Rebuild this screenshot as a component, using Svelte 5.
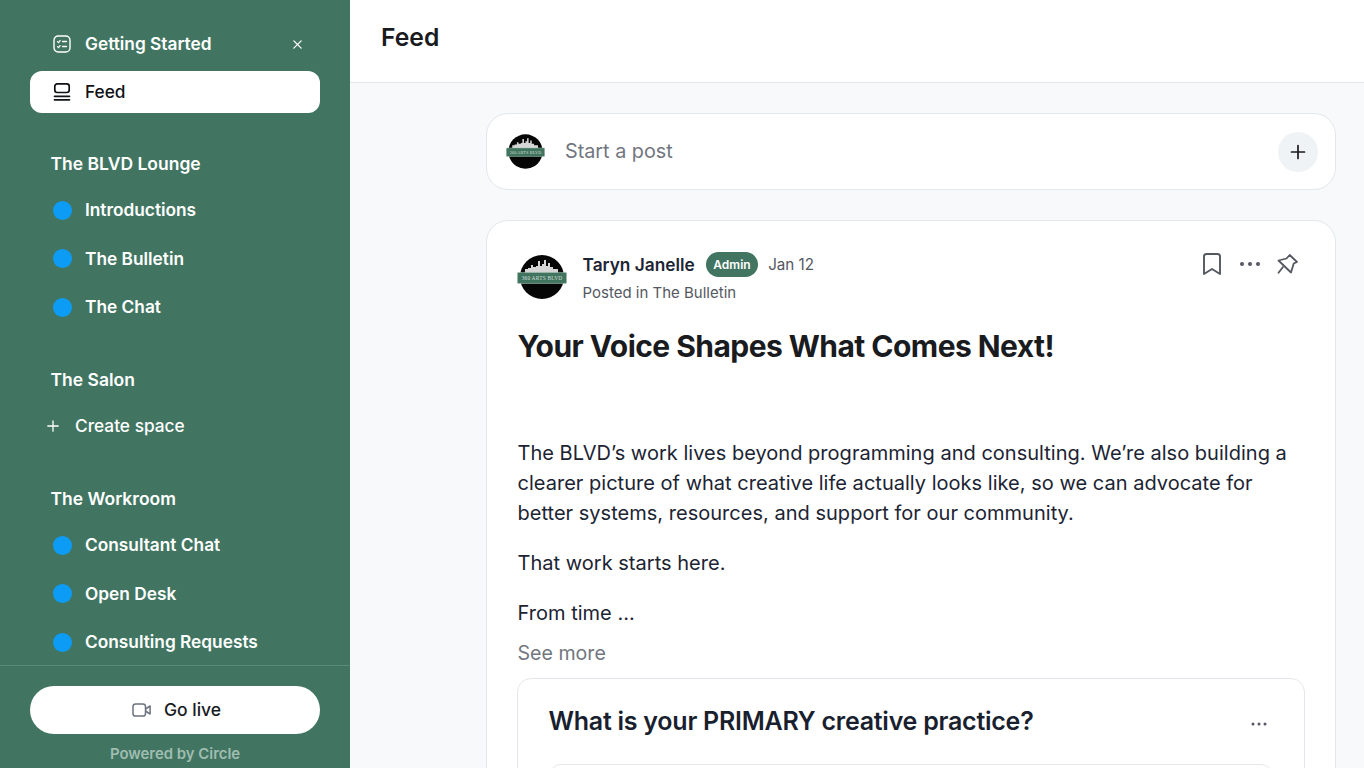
<script>
  const lounge = ['Introductions', 'The Bulletin', 'The Chat'];
  const workroom = ['Consultant Chat', 'Open Desk', 'Consulting Requests'];
</script>

{#snippet avatar(cls)}
  <svg class={cls} viewBox="0 0 50 50" aria-hidden="true">
    <defs><clipPath id={cls + '-c'}><circle cx="25" cy="25" r="22" /></clipPath></defs>
    <circle cx="25" cy="25" r="22" fill="#060606" />
    <g clip-path={'url(#' + cls + '-c)'}>
      <path fill="#d6d6d6" d="M3 21h5v-4h3v-1h3v-3h2v2h3v-1h2v-5h2v5h2v-2h2v-4h2v6h2v-3h2v4h3v2h5v5H3z" />
    </g>
    <rect x="0.400" y="20.400" width="49.200" height="11" rx="1" fill="#41745f" stroke="#a9c4b8" stroke-width=".6" />
    <text class="av-text" x="25" y="27.600" text-anchor="middle">360 ARTS BLVD</text>
  </svg>
{/snippet}

<div class="page">
  <aside class="side">
    <nav class="nav">
      <div class="item top">
        <svg class="ic" viewBox="0 0 20 20" fill="none" stroke="currentColor" stroke-width="1.4" stroke-linecap="round">
          <rect x="2" y="2" width="16" height="16" rx="4.200" />
          <path d="M10.500 7.500h4M10.500 12.500h4M5.500 7.600l1 1 1.600-2M5.500 12.600l1 1 1.600-2" stroke-width="1.300" />
        </svg>
        <span class="grow">Getting Started</span>
        <svg class="x" viewBox="0 0 12 12" fill="none" stroke="currentColor" stroke-width="1.4" stroke-linecap="round"><path d="M2 2l8 8M10 2l-8 8" /></svg>
      </div>
      <div class="item active">
        <svg class="ic" viewBox="0 0 20 20" fill="none" stroke="currentColor" stroke-width="1.7" stroke-linecap="round">
          <rect x="2.800" y="1.800" width="14.400" height="8.700" rx="2.400" />
          <path d="M2.500 14.300h15M2.500 17.800h15" />
        </svg>
        <span>Feed</span>
      </div>

      <h3 class="sec first">The BLVD Lounge</h3>
      {#each lounge as t}
        <div class="item ch"><span class="dot"></span><span>{t}</span></div>
      {/each}

      <h3 class="sec">The Salon</h3>
      <div class="item create">
        <svg class="plus" viewBox="0 0 12 12" fill="none" stroke="currentColor" stroke-width="1.3" stroke-linecap="round"><path d="M6 .8v10.400M.8 6h10.400" /></svg>
        <span>Create space</span>
      </div>

      <h3 class="sec">The Workroom</h3>
      {#each workroom as t}
        <div class="item ch"><span class="dot"></span><span>{t}</span></div>
      {/each}
    </nav>
    <div class="foot">
      <button class="live">
        <svg class="cam" viewBox="0 0 20 16" fill="none" stroke="#6b7280" stroke-width="1.5" stroke-linejoin="round">
          <rect x="1" y="2" width="12.500" height="12" rx="2.600" />
          <path d="M13.500 7l4.600-3v8l-4.600-3" />
        </svg>
        <span>Go live</span>
      </button>
      <div class="pow">Powered by Circle</div>
    </div>
  </aside>

  <main class="main">
    <header class="head"><h1>Feed</h1></header>
    <div class="scroll">
      <div class="composer">
        {@render avatar('av-sm')}
        <span class="start">Start a post</span>
        <span class="add">
          <svg viewBox="0 0 16 16" fill="none" stroke="#191b1f" stroke-width="1.700" stroke-linecap="round"><path d="M8 1.500v13M1.500 8h13" /></svg>
        </span>
      </div>

      <article class="post">
        <div class="meta">
          {@render avatar('av-lg')}
          <div class="who">
            <div class="l1">
              <span class="name">Taryn Janelle</span>
              <span class="badge">Admin</span>
              <span class="date">Jan 12</span>
            </div>
            <div class="l2">Posted in The Bulletin</div>
          </div>
          <div class="acts">
            <svg class="bm" viewBox="0 0 20 24" fill="none" stroke="#545861" stroke-width="1.900" stroke-linejoin="round"><path d="M2 4.500A2.500 2.500 0 0 1 4.500 2h11A2.500 2.500 0 0 1 18 4.500V22l-8-5-8 5z" /></svg>
            <svg class="more" viewBox="0 0 22 6" fill="#545861"><circle cx="3" cy="3" r="2" /><circle cx="11" cy="3" r="2" /><circle cx="19" cy="3" r="2" /></svg>
            <svg class="pin" viewBox="0 0 21 20" fill="none" stroke="#545861" stroke-width="1.800" stroke-linejoin="round" stroke-linecap="round"><path d="M12.700 1L20 8l-3.300 1.500L14 18.500 1.500 6.500 9.500 4.500z" /><path d="M6 13l-4.500 5.700" /></svg>
          </div>
        </div>
        <h2>Your Voice Shapes What Comes Next!</h2>
        <div class="body">
          <p>The BLVD’s work lives beyond programming and consulting. We’re also building a clearer picture of what creative life actually looks like, so we can advocate for better systems, resources, and support for our community.</p>
          <p>That work starts here.</p>
          <p>From time ...</p>
        </div>
        <div class="see">See more</div>
        <div class="poll">
          <div class="poll-head">
            <h4>What is your PRIMARY creative practice?</h4>
            <svg class="more-sm" viewBox="0 0 16 4" fill="#545861"><circle cx="2" cy="2" r="1.500" /><circle cx="8" cy="2" r="1.500" /><circle cx="14" cy="2" r="1.500" /></svg>
          </div>
          <div class="opt"></div>
        </div>
      </article>
    </div>
  </main>
</div>

<style>
  :global(body) { margin: 0; font-family: Inter, "Liberation Sans", sans-serif; }
  .page { display: flex; width: 1364px; height: 768px; overflow: hidden; background: #f7f9fa; }
  .side { width: 350px; flex: none; background: #417562; color: #fff; display: flex; flex-direction: column; }
  .nav { flex: 1; min-height: 0; overflow: hidden; padding: 23px 30px 0; }
  .item { display: flex; align-items: center; height: 42px; padding: 0 17px 0 22px; box-sizing: border-box; font-size: 17.300px; font-weight: 600; line-height: 24px; margin-bottom: 6.500px; }
  .top { margin-bottom: 6px; }
  .active { background: #fff; color: #0f1115; border-radius: 12px; margin-bottom: 0; font-weight: 550; }
  .ic { width: 20px; height: 20px; margin-right: 13px; flex: none; }
  .grow { flex: 1; }
  .x { width: 11px; height: 11px; }
  .sec { margin: 0; padding: 0 20.500px; font-size: 17.500px; font-weight: 600; line-height: 24px; margin-top: 40px; margin-bottom: 13px; }
  .sec.first { margin-top: 39px; }
  .ch .dot { width: 19px; height: 19px; border-radius: 50%; background: #0d9cf5; margin-left: 1px; margin-right: 13px; flex: none; }
  .create { padding-left: 17px; font-weight: 500; }
  .plus { width: 12px; height: 12px; margin-right: 16px; }
  .foot { flex: none; height: 103px; border-top: 1px solid #5b8a78; box-sizing: border-box; padding: 20px 30px 0; }
  .live { width: 290px; height: 48px; background: #fff; border: 0; border-radius: 24px; display: flex; align-items: center; justify-content: center; gap: 12px; font: 500 17.500px/24px Inter, sans-serif; color: #191b1f; padding: 0 0 0 3px; }
  .cam { width: 20px; height: 16px; }
  .pow { text-align: center; font-size: 14.900px; font-weight: 600; line-height: 20px; color: #a0bdb1; margin-top: 10px; }

  .main { flex: 1; min-width: 0; display: flex; flex-direction: column; }
  .head { height: 83px; flex: none; box-sizing: border-box; background: #fff; border-bottom: 1px solid #e4e7eb; padding: 21px 31px 0; }
  h1 { margin: 0; font-size: 24.700px; font-weight: 600; line-height: 32px; color: #191b1f; }
  .scroll { flex: 1; min-height: 0; overflow: hidden; padding: 30px 28px 0 136px; }
  .composer { height: 77px; box-sizing: border-box; background: #fff; border: 1px solid #e4e7eb; border-radius: 22px; display: flex; align-items: center; padding: 0 17px 0 19px; }
  .av-sm { width: 39px; height: 39px; margin-right: 20px; flex: none; }
  .start { flex: 1; font-size: 19.800px; line-height: 24px; margin-top: -1px; color: #717680; }
  .add { width: 40px; height: 40px; border-radius: 50%; background: #f0f3f5; display: flex; align-items: center; justify-content: center; }
  .add svg { width: 16px; height: 16px; }
  .post { margin-top: 30px; background: #fff; border: 1px solid #e4e7eb; border-radius: 22px; padding: 30px 30px 0 30.500px; }
  .meta { display: flex; align-items: flex-start; }
  .av-lg { width: 50px; height: 50px; margin: 1px 15.500px 0 -0.500px; flex: none; }
  .who { flex: 1; }
  .l1 { display: flex; align-items: center; height: 26px; }
  .name { font-size: 17.300px; font-weight: 600; color: #1c2433; }
  .badge { margin-left: 11px; height: 25px; padding: 0 7.500px; border-radius: 13px; background: #417562; color: #fff; font-size: 12px; font-weight: 600; line-height: 25px; }
  .date { margin-left: 10px; font-size: 15.200px; color: #545861; }
  .l2 { font-size: 15px; line-height: 20px; color: #545861; margin-top: 6px; }
  .acts { display: flex; align-items: center; height: 26px; }
  .bm { width: 20px; height: 24px; }
  .more { width: 22px; height: 6px; margin-left: 17px; }
  .pin { width: 21px; height: 20px; margin-left: 16.500px; margin-right: 7px; }
  h2 { margin: 23px 0 0; font-size: 30px; font-weight: 700; line-height: 40px; color: #191b1f; letter-spacing: -0.550px; }
  .body { margin-top: 72px; font-size: 20px; line-height: 30px; letter-spacing: 0.020px; color: #1c2433; }
  .body p { margin: 0 0 20px; }
  .see { font-size: 19.600px; line-height: 30px; color: #717680; margin-top: -10px; }
  .poll { margin: 10px 0 0 -0.500px; border: 1px solid #e4e7eb; border-radius: 14px; padding: 26px 31px 0 30.500px; height: 200px; }
  .poll-head { display: flex; align-items: center; justify-content: space-between; padding-right: 6px; }
  h4 { margin: 0; font-size: 25px; font-weight: 600; line-height: 32px; letter-spacing: -0.250px; color: #191f2f; }
  .more-sm { width: 16px; height: 4px; margin-top: 6px; }
  .opt { margin-top: 27px; height: 60px; border: 1px solid #e4e7eb; border-radius: 12px; }
  .av-text { font-family: "Liberation Serif", serif; font-size: 5.400px; letter-spacing: .2px; fill: #cfded7; }
</style>
